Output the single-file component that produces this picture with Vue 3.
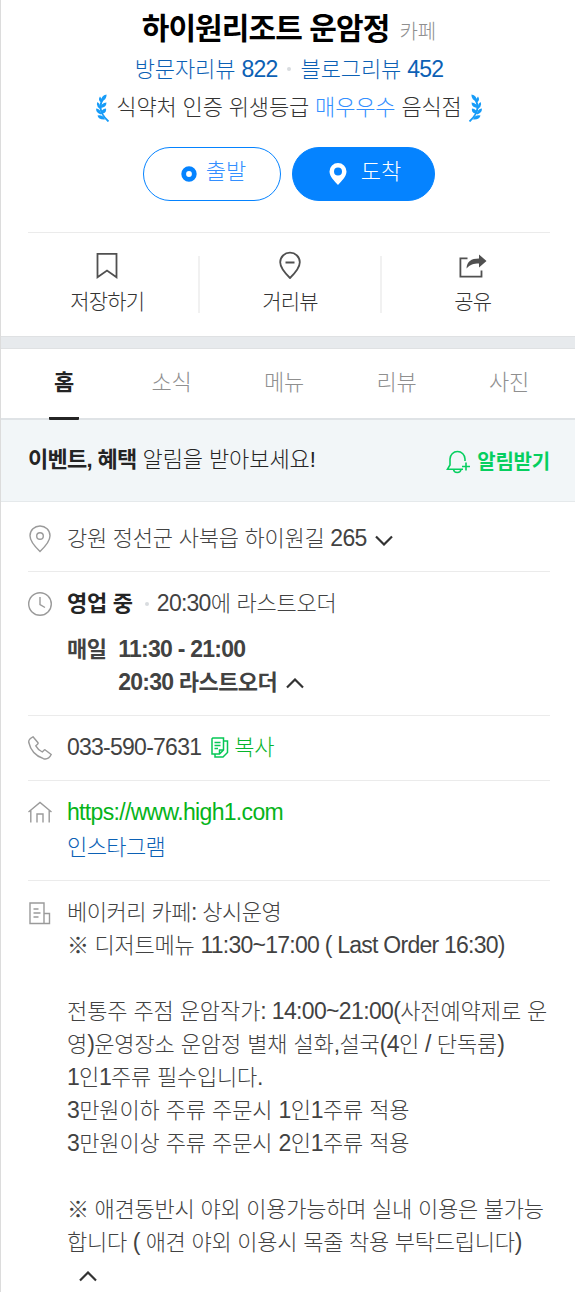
<template>
  <div class="place">
    <header class="head">
      <h1 class="title">하이원리조트 운암정<span class="category">카페</span></h1>
      <div class="reviews">
        <a>방문자리뷰 <em>822</em></a>
        <i class="dot"></i>
        <a>블로그리뷰 <em>452</em></a>
      </div>
      <div class="hygiene">
        <svg class="laurel" width="14" height="28" viewBox="0 0 14 28">
          <path d="M7 5Q0 16 12.500 27.500" fill="none" stroke="#179cf8" stroke-width="1.800"/>
          <path d="M5 7.500Q5 1.500 10.500 .5Q11 6 5 7.500ZM5 8.500Q1.500 6 4 2.500Q6.500 5 5 8.500ZM4 14Q5 9 10.500 8.500Q10.500 13.500 4 14ZM4 15Q-.5 12 1.500 8Q5 10 4 15ZM4.500 20Q5 15 10 14.500Q11 19.500 4.500 20ZM5 20.500Q0 19 0 14.500Q5 15 5 20.500ZM9 25.500Q2.500 26 1.500 21.500Q7 20.500 9 25.500Z" fill="#179cf8"/>
        </svg>
        <span>식약처 인증 위생등급 <b>매우우수</b> 음식점</span>
        <svg class="laurel flip" width="14" height="28" viewBox="0 0 14 28">
          <path d="M7 5Q0 16 12.500 27.500" fill="none" stroke="#179cf8" stroke-width="1.800"/>
          <path d="M5 7.500Q5 1.500 10.500 .5Q11 6 5 7.500ZM5 8.500Q1.500 6 4 2.500Q6.500 5 5 8.500ZM4 14Q5 9 10.500 8.500Q10.500 13.500 4 14ZM4 15Q-.5 12 1.500 8Q5 10 4 15ZM4.500 20Q5 15 10 14.500Q11 19.500 4.500 20ZM5 20.500Q0 19 0 14.500Q5 15 5 20.500ZM9 25.500Q2.500 26 1.500 21.500Q7 20.500 9 25.500Z" fill="#179cf8"/>
        </svg>
      </div>
      <div class="route">
        <button class="route-btn start">
          <svg width="16" height="16" viewBox="0 0 16 16"><circle cx="8" cy="8" r="5.3" fill="none" stroke="#0583ff" stroke-width="4.8"/></svg>
          <span>출발</span>
        </button>
        <button class="route-btn arrive">
          <svg width="18" height="22" viewBox="0 0 18 22"><path fill-rule="evenodd" d="M9 0a8.500 8.500 0 0 1 8.500 8.500C17.500 13.500 12.500 18 9 22C5.500 18 .500 13.500 .500 8.500A8.500 8.500 0 0 1 9 0ZM9 4.500a4 4 0 1 0 0 8a4 4 0 0 0 0-8Z" fill="#fff"/></svg>
          <span>도착</span>
        </button>
      </div>
    </header>

    <div class="actions">
      <div class="action-list">
        <a class="action">
          <svg width="28" height="28" viewBox="0 0 28 28" fill="none" stroke="#505050" stroke-width="1.8"><path d="M4.500 2.900H23.500V26.200L14 19.500L4.500 26.200Z"/></svg>
          <span>저장하기</span>
        </a>
        <a class="action">
          <svg width="28" height="28" viewBox="0 0 28 28" fill="none" stroke="#505050" stroke-width="1.8"><path d="M14 27Q4.200 17.500 4.200 11.300A9.800 9.600 0 0 1 23.800 11.300Q23.800 17.500 14 27ZM9.500 11.500H18.500"/></svg>
          <span>거리뷰</span>
        </a>
        <a class="action">
          <svg width="28" height="28" viewBox="0 0 28 28"><path d="M8.500 7.400H1.400V25.600H22.500V19.500" fill="none" stroke="#505050" stroke-width="1.800"/><path d="M7.500 17.500C8 10.500 12 7.500 20 7.500V3.500L27.500 10L20 16.500V12.500C14.500 12.500 11 13.500 7.500 17.500Z" fill="#505050"/></svg>
          <span>공유</span>
        </a>
      </div>
    </div>

    <div class="band"></div>

    <nav class="tabs">
      <a v-for="tab in tabs" :key="tab" class="tab" :class="{ active: tab === current }">{{ tab }}</a>
    </nav>

    <div class="notice">
      <span class="notice-text"><b>이벤트, 혜택</b> 알림을 받아보세요!</span>
      <a class="notice-btn">
        <svg width="25" height="24" viewBox="0 0 25 24" fill="none" stroke="#06cf5f" stroke-width="1.6"><path d="M19 11V9A7.500 7.500 0 0 0 4 9V15L1.500 19.200H17M7.500 19.500C8 23.500 14.500 23.500 15 19.500M20 12.500V20.500M16 16.500H24"/></svg>
        <span>알림받기</span>
      </a>
    </div>

    <section class="info">
      <div class="row address">
        <svg class="icon" width="24" height="28" viewBox="0 0 24 28"><path d="M12 26.500Q2 17 2 10.800A10 9.800 0 0 1 22 10.800Q22 17 12 26.500Z"/><circle cx="12" cy="11" r="3.300"/></svg>
        <p class="line">강원 정선군 사북읍 하이원길 <em>265</em>
          <svg class="chev" width="18" height="11" viewBox="0 0 18 11"><path d="M1 1.500L9 9.500L17 1.500"/></svg>
        </p>
      </div>

      <div class="row hours">
        <svg class="icon" width="24" height="24" viewBox="0 0 24 24"><circle cx="12" cy="12" r="11.300"/><path d="M12 5V12.500L17 15.500"/></svg>
        <div>
          <p class="line status"><b>영업 중</b><i class="dot"></i><span><em>20:30</em>에 라스트오더</span></p>
          <div class="time">
            <span class="day">매일</span>
            <div>
              <p class="line"><em>11:30 - 21:00</em></p>
              <p class="line last-order"><em>20:30</em> 라스트오더
                <svg class="chev" width="18" height="11" viewBox="0 0 18 11"><path d="M1 9.500L9 1.500L17 9.500"/></svg>
              </p>
            </div>
          </div>
        </div>
      </div>

      <div class="row phone">
        <svg class="icon" width="24" height="24" viewBox="0 0 24 24"><path d="M5 .8L9.800 6.500Q10.500 7.500 9.500 8.300L7.800 9.800Q10 13.800 14.300 16L16 14.200Q16.800 13.500 17.600 14.200L23.200 18.500Q20.500 24 15.500 22.700Q3.500 18.500 .8 6.500Q.2 3 5 .8Z"/></svg>
        <p class="line"><em>033-590-7631</em>
          <a class="copy">
            <svg width="18" height="21" viewBox="0 0 18 21" fill="none" stroke="#06c755" stroke-width="1.500"><path d="M1.800 1H12.500V13L8.500 17H1V1.800ZM8.500 17V13H12.500M3.500 5.500H9.500M3.500 8.500H9.500M3.500 11.500H7M13 4H16.500V15.500L12 20H4V17.500"/></svg>
            복사
          </a>
        </p>
      </div>

      <div class="row links">
        <svg class="icon" width="24" height="24" viewBox="0 0 24 24"><path d="M.5 11L12 1.500L23.500 11M2.800 9.500V21.500M21.200 9.500V21.500M9 21.500V13H15V21.500"/></svg>
        <div>
          <p class="line url"><em>https://www.high1.com</em></p>
          <p class="line insta">인스타그램</p>
        </div>
      </div>

      <div class="row desc">
        <svg class="icon" width="24" height="24" viewBox="0 0 24 24"><path d="M2 2H16V22.500H2ZM16 12.500H21.500V22.500H16M5.500 8H10.500M5.500 12H12.500M5.500 16H10.500"/></svg>
        <div>
          <p v-for="(item, i) in description" :key="i" class="line" :class="item.track">
            <template v-for="(part, n) in split(item.text)" :key="n"><em v-if="n % 2">{{ part }}</em><template v-else>{{ part }}</template></template>
          </p>
          <svg class="chev fold" width="18" height="11" viewBox="0 0 18 11"><path d="M1 9.500L9 1.500L17 9.500"/></svg>
        </div>
      </div>
    </section>
  </div>
</template>

<script setup>
import { ref } from 'vue'

const tabs = ['홈', '소식', '메뉴', '리뷰', '사진']
const current = ref('홈')

const description = [
  { text: '베이커리 카페: 상시운영', track: 'tight' },
  { text: '※ 디저트메뉴 11:30~17:00 ( Last Order 16:30)' },
  { text: '' },
  { text: '전통주 주점 운암작가: 14:00~21:00(사전예약제로 운', track: 'loose' },
  { text: '영)운영장소 운암정 별채 설화,설국(4인 / 단독룸)', track: 'loose' },
  { text: '1인1주류 필수입니다.' },
  { text: '3만원이하 주류 주문시 1인1주류 적용', track: 'loose' },
  { text: '3만원이상 주류 주문시 2인1주류 적용', track: 'loose' },
  { text: '' },
  { text: '※ 애견동반시 야외 이용가능하며 실내 이용은 불가능' },
  { text: '합니다 ( 애견 야외 이용시 목줄 착용 부탁드립니다)' }
]

// odd entries are latin runs, which carry tighter tracking
const split = (text) => text.split(/([A-Za-z0-9:~()/.,]+(?: [A-Za-z0-9:~()/.,]+)*)/)
</script>

<style>
body {
  margin: 0;
  background: #fff;
}
</style>

<style scoped>
.place {
  box-sizing: border-box;
  width: 575px;
  height: 1292px;
  overflow: hidden;
  border-left: 1px solid #dcdcdc;
  background: #fff;
  color: #424242;
  font-family: 'Liberation Sans', 'Noto Sans CJK KR', sans-serif;
  font-size: 22px;
  font-weight: 300;
  line-height: 33px;
  letter-spacing: -0.25px;
}

p,
h1 {
  margin: 0;
}

em {
  font-size: 23px;
  font-style: normal;
  line-height: 1;
  letter-spacing: -0.75px;
}

b {
  font-weight: 700;
}

svg {
  flex-shrink: 0;
}

.head {
  display: flex;
  flex-direction: column;
  align-items: center;
  height: 232px;
  padding-left: 2px;
}

.title {
  box-sizing: border-box;
  height: 52px;
  padding-top: 7px;
  font-size: 30px;
  font-weight: 700;
  line-height: 44px;
  letter-spacing: -0.9px;
  color: #000;
  white-space: nowrap;
}

.category {
  margin-left: 10px;
  font-size: 20px;
  font-weight: 300;
  letter-spacing: 0;
  color: #8f8f8f;
}

.reviews {
  display: flex;
  align-items: center;
  height: 34px;
  letter-spacing: -0.1px;
  color: #0c61b5;
}

.dot {
  width: 4px;
  height: 4px;
  margin: 0 10px 0 9px;
  border-radius: 2px;
  background: #d9dcdf;
}

.hygiene {
  display: flex;
  align-items: center;
  gap: 6px;
  height: 42px;
  letter-spacing: -0.15px;
  color: #333;
}

.hygiene b {
  font-weight: 300;
  color: #338fff;
}

.laurel {
  margin-top: 2px;
}

.flip {
  transform: scaleX(-1);
}

.route {
  display: flex;
  gap: 11px;
  margin-top: 19px;
}

.route-btn {
  box-sizing: border-box;
  display: flex;
  align-items: center;
  justify-content: center;
  gap: 9px;
  width: 138px;
  height: 54px;
  padding: 0 0 0 3px;
  border: 1px solid #0583ff;
  border-radius: 27px;
  background: #fff;
  color: #338fff;
  font: inherit;
}

.arrive {
  gap: 14px;
  width: 143px;
  background: #0583ff;
  color: #fff;
}

.route-btn span {
  margin-top: -5px;
}

.actions {
  height: 103px;
  margin: 0 25px 0 27px;
  border-top: 1px solid #ebebeb;
}

.action-list {
  display: flex;
  margin: 0 -13px 0 -11px;
}

.action {
  display: flex;
  flex: 1;
  flex-direction: column;
  align-items: center;
  height: 57px;
  margin-top: 23px;
  font-size: 21px;
  letter-spacing: -0.8px;
  color: #333;
}

.action svg {
  margin-top: -5px;
}

.action span {
  margin-top: 6px;
}

.action + .action {
  border-left: 2px solid #f1f1f1;
}

.band {
  height: 11px;
  border-top: 1px solid #dfe1e3;
  border-bottom: 1px solid #dfe1e3;
  background: #e7eaed;
}

.tabs {
  display: flex;
  justify-content: space-between;
  height: 69px;
  padding: 0 46px 0 48px;
  border-bottom: 2px solid #dfe3e6;
  line-height: 68px;
  color: #8f8f8f;
}

.tab.active {
  box-sizing: border-box;
  width: 30px;
  height: 71px;
  border-bottom: 3px solid #242424;
  border-radius: 1px;
  font-weight: 700;
  text-align: center;
  color: #242424;
}

.notice {
  display: flex;
  align-items: center;
  justify-content: space-between;
  height: 81px;
  padding: 0 25px 0 27px;
  border-bottom: 1px solid #e5e9eb;
  background: #f2f6f8;
  color: #242424;
}

.notice-text {
  margin-top: -3px;
  letter-spacing: -0.1px;
}

.notice-text b {
  letter-spacing: -0.7px;
}

.notice-btn {
  display: flex;
  align-items: center;
  gap: 6px;
  margin-top: 3px;
  font-size: 20px;
  font-weight: 700;
  letter-spacing: -0.2px;
  color: #06cf5f;
}

.info {
  padding: 0 25px 0 27px;
}

.row {
  box-sizing: border-box;
  display: flex;
  border-bottom: 1px solid #ebebeb;
}

.row > .icon {
  width: 24px;
  margin-right: 15px;
}

.icon {
  fill: none;
  stroke: #9a9a9a;
  stroke-width: 1.4;
}

.line {
  height: 33px;
  white-space: nowrap;
}

.chev {
  fill: none;
  stroke: #333;
  stroke-width: 2.2;
}

.address {
  height: 70px;
  padding-top: 20px;
}

.address .icon {
  margin-top: 3px;
}

.address .chev {
  margin-left: 9px;
  vertical-align: 0;
}

.hours {
  height: 144px;
  padding-top: 15px;
}

.hours .icon {
  margin-top: 5px;
}

.status {
  display: flex;
  align-items: center;
}

.status b {
  color: #242424;
}

.status .dot {
  margin: 0 8px 0 12px;
}

.time {
  display: flex;
  gap: 12px;
  margin-top: 13px;
  font-weight: 700;
}

.day {
  letter-spacing: -0.6px;
}

.last-order {
  letter-spacing: -0.6px;
}

.last-order .chev {
  margin-left: 3px;
  vertical-align: 1px;
}

.phone {
  height: 65px;
  padding-top: 15px;
}

.phone .icon {
  margin-top: 5px;
}

.phone .line {
  display: flex;
  align-items: center;
  gap: 10px;
}

.copy {
  display: flex;
  align-items: center;
  gap: 5px;
  color: #06b52c;
}

.links {
  height: 100px;
  padding-top: 15px;
}

.links .icon {
  margin-top: 5px;
}

.url {
  height: 35px;
  color: #06b41a;
}

.url em {
  letter-spacing: -0.67px;
}

.insta {
  letter-spacing: -0.6px;
  color: #0c61b5;
}

.desc {
  padding-top: 15px;
  border-bottom: 0;
}

.desc .icon {
  margin-top: 5px;
}

.tight {
  letter-spacing: -0.5px;
}

.loose {
  letter-spacing: -0.1px;
}

.loose em {
  letter-spacing: -0.65px;
}

.fold {
  display: block;
  margin: 12px 0 0 12px;
}
</style>
